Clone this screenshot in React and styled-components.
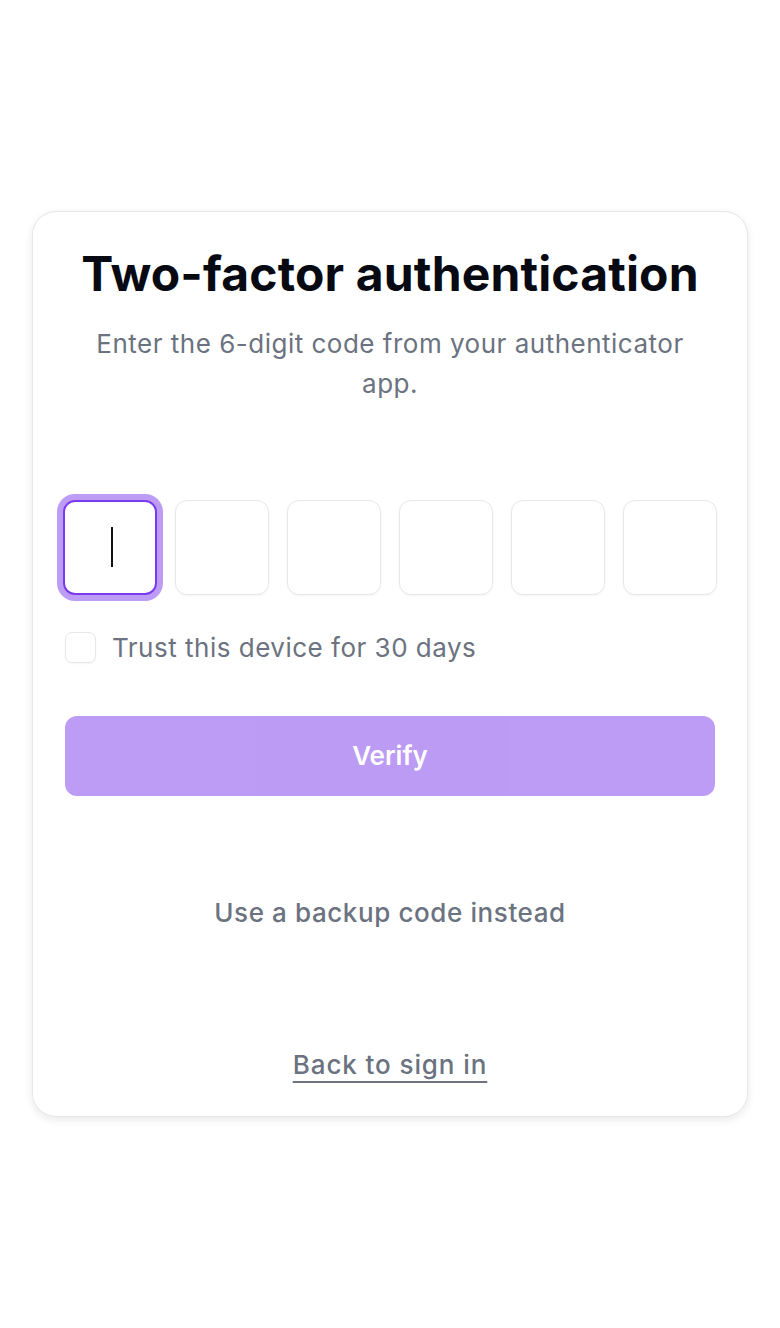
import React from "react";
import styled, { createGlobalStyle } from "styled-components";

const Global = createGlobalStyle`
  html, body { margin: 0; padding: 0; background: #ffffff; }
  body { font-family: Inter, "Noto Sans", sans-serif; -webkit-font-smoothing: antialiased; }
  * { box-sizing: border-box; }
`;

const Page = styled.main`
  min-height: 100vh;
  display: flex;
  align-items: center;
  justify-content: center;
  padding: 0 32px;
`;

const Card = styled.section`
  width: 100%;
  background: #fff;
  border: 1.5px solid #e5e7eb;
  border-radius: 24px;
  box-shadow: 0 3px 8px rgba(17, 24, 39, 0.09);
  padding: 32px;
  display: flex;
  flex-direction: column;
  align-items: stretch;
`;

const Title = styled.h1`
  margin: 0;
  font-size: 48px;
  line-height: 59px;
  font-weight: 700;
  letter-spacing: 0.15px;
  color: #070a13;
  text-align: center;
`;

const Subtitle = styled.p`
  margin: 21px 0 0;
  font-size: 26px;
  line-height: 40px;
  letter-spacing: 0.5px;
  color: #6b7280;
  text-align: center;
`;

const Cells = styled.div`
  margin-top: 96px;
  display: flex;
  justify-content: center;
  gap: 17.5px;
`;

const CellWrap = styled.div`
  position: relative;
  flex: 0 0 94.5px;
  height: 94.5px;
`;

const Cell = styled.input`
  width: 100%;
  height: 100%;
  border-radius: 12px;
  border: ${(p) => (p.$active ? "2px solid #7c3aed" : "1.5px solid #e5e7eb")};
  box-shadow: ${(p) => (p.$active ? "0 0 0 6px rgba(124, 58, 237, 0.5)" : "0 1px 2px rgba(0,0,0,0.04)")};
  background: #fff;
  font-family: inherit;
  font-size: 36px;
  text-align: center;
  outline: none;
  caret-color: transparent;
`;

const Caret = styled.span`
  position: absolute;
  left: 48px;
  top: 27px;
  width: 2px;
  height: 40px;
  background: #111;
  pointer-events: none;
`;

const TrustRow = styled.label`
  margin-top: 37px;
  display: flex;
  align-items: center;
  gap: 16px;
  font-size: 26px;
  line-height: 31px;
  letter-spacing: 0.5px;
  color: #6b7280;
`;

const Box = styled.span`
  flex: 0 0 31px;
  height: 31px;
  border: 1.5px solid #e5e7eb;
  border-radius: 7px;
  background: #fff;
  box-shadow: 0 1px 2px rgba(0,0,0,0.04);
`;

const Verify = styled.button`
  margin-top: 53px;
  height: 80px;
  border: none;
  border-radius: 12px;
  background: #7c3aed;
  opacity: 0.5;
  color: #fff;
  font-family: inherit;
  font-size: 26px;
  font-weight: 600;
`;

const Backup = styled.button`
  margin-top: 97px;
  align-self: center;
  background: none;
  border: none;
  padding: 0;
  font-family: inherit;
  font-size: 26px;
  line-height: 39px;
  letter-spacing: 0.6px;
  font-weight: 500;
  color: #6b7280;
`;

const BackLink = styled.a`
  margin-top: 113px;
  align-self: center;
  font-size: 26px;
  line-height: 39px;
  letter-spacing: 0.9px;
  font-weight: 500;
  color: #6b7280;
  text-decoration: underline;
  text-decoration-thickness: 2px;
  text-underline-offset: 7px;
`;

export default function App() {
  return (
    <>
      <Global />
      <Page>
        <Card>
          <Title>Two-factor authentication</Title>
          <Subtitle>Enter the 6-digit code from your authenticator app.</Subtitle>
          <Cells>
            {[0, 1, 2, 3, 4, 5].map((i) => (
              <CellWrap key={i}>
                <Cell $active={i === 0} maxLength={1} inputMode="numeric" aria-label={`Digit ${i + 1}`} />
                {i === 0 && <Caret />}
              </CellWrap>
            ))}
          </Cells>
          <TrustRow>
            <Box />
            Trust this device for 30 days
          </TrustRow>
          <Verify disabled>Verify</Verify>
          <Backup>Use a backup code instead</Backup>
          <BackLink href="#">Back to sign in</BackLink>
        </Card>
      </Page>
    </>
  );
}
